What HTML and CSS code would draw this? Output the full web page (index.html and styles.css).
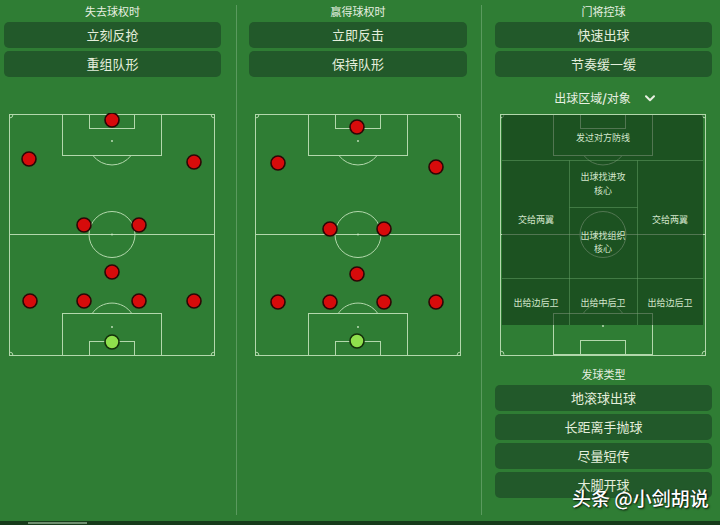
FILE: index.html
```html
<!DOCTYPE html>
<html lang="zh">
<head>
<meta charset="utf-8">
<title>战术设置</title>
<link rel="stylesheet" href="styles.css">
</head>
<body>
<div class="screen">
  <div class="cols">
    <section class="col c1">
      <div class="hd">失去球权时</div>
      <div class="btns">
        <div class="btn">立刻反抢</div>
        <div class="btn">重组队形</div>
      </div>
      <svg class="pitch" viewBox="0 0 208 244" width="208" height="244">
        <g class="ln">
          <rect x="1.5" y="1.5" width="205" height="241"/>
          <line x1="1.5" y1="121.5" x2="206.5" y2="121.5"/>
          <circle cx="104" cy="121.5" r="23"/>
          <rect x="54.5" y="1.5" width="99" height="41"/>
          <rect x="81.5" y="1.5" width="45" height="14"/>
          <path d="M84.9 42.5 A24 24 0 0 0 123.1 42.5"/>
          <rect x="54.5" y="200.5" width="99" height="42"/>
          <rect x="81.5" y="228.5" width="45" height="14"/>
          <path d="M84.2 200.5 A24 24 0 0 1 123.8 200.5"/>
          <path d="M1.5 5 A3.5 3.5 0 0 0 5 1.5 M203 1.5 A3.5 3.5 0 0 0 206.5 5 M1.5 239 A3.5 3.5 0 0 1 5 242.5 M203 242.5 A3.5 3.5 0 0 1 206.5 239"/>
        </g>
        <g class="dot"><circle cx="104" cy="121.5" r="0.9"/><circle cx="104" cy="28" r="0.9"/><circle cx="104" cy="214" r="0.9"/></g>
        <g class="pl">
          <circle cx="104" cy="7" r="7"/>
          <circle cx="21" cy="46" r="7"/>
          <circle cx="186" cy="49" r="7"/>
          <circle cx="76" cy="112" r="7"/>
          <circle cx="131" cy="112" r="7"/>
          <circle cx="104" cy="159" r="7"/>
          <circle cx="22" cy="188" r="7"/>
          <circle cx="76" cy="188" r="7"/>
          <circle cx="131" cy="188" r="7"/>
          <circle cx="186" cy="188" r="7"/>
        </g>
        <circle class="gk" cx="104" cy="229" r="7"/>
      </svg>
    </section>
    <div class="vr"></div>
    <section class="col c2">
      <div class="hd">赢得球权时</div>
      <div class="btns">
        <div class="btn">立即反击</div>
        <div class="btn">保持队形</div>
      </div>
      <svg class="pitch" viewBox="0 0 208 244" width="208" height="244">
        <g class="ln">
          <rect x="1.5" y="1.5" width="205" height="241"/>
          <line x1="1.5" y1="121.5" x2="206.5" y2="121.5"/>
          <circle cx="104" cy="121.5" r="23"/>
          <rect x="54.5" y="1.5" width="99" height="41"/>
          <rect x="81.5" y="1.5" width="45" height="14"/>
          <path d="M84.9 42.5 A24 24 0 0 0 123.1 42.5"/>
          <rect x="54.5" y="200.5" width="99" height="42"/>
          <rect x="81.5" y="228.5" width="45" height="14"/>
          <path d="M84.2 200.5 A24 24 0 0 1 123.8 200.5"/>
          <path d="M1.5 5 A3.5 3.5 0 0 0 5 1.5 M203 1.5 A3.5 3.5 0 0 0 206.5 5 M1.5 239 A3.5 3.5 0 0 1 5 242.5 M203 242.5 A3.5 3.5 0 0 1 206.5 239"/>
        </g>
        <g class="dot"><circle cx="104" cy="121.5" r="0.9"/><circle cx="104" cy="28" r="0.9"/><circle cx="104" cy="214" r="0.9"/></g>
        <g class="pl">
          <circle cx="103" cy="14" r="7"/>
          <circle cx="24" cy="50" r="7"/>
          <circle cx="182" cy="54" r="7"/>
          <circle cx="76" cy="116" r="7"/>
          <circle cx="130" cy="116" r="7"/>
          <circle cx="103" cy="161" r="7"/>
          <circle cx="24" cy="189" r="7"/>
          <circle cx="76" cy="189" r="7"/>
          <circle cx="130" cy="189" r="7"/>
          <circle cx="182" cy="189" r="7"/>
        </g>
        <circle class="gk" cx="103" cy="228" r="7"/>
      </svg>
    </section>
    <div class="vr"></div>
    <section class="col c3">
      <div class="hd">门将控球</div>
      <div class="btns">
        <div class="btn">快速出球</div>
        <div class="btn">节奏缓一缓</div>
      </div>
      <div class="sel">
        <span>出球区域<b>/</b>对象</span>
        <svg class="chev" viewBox="0 0 10 7" width="10" height="7"><path d="M1 1.2 L5 5.2 L9 1.2"/></svg>
      </div>
      <svg class="pitch" viewBox="0 0 208 244" width="208" height="244">
        <g class="ln">
          <rect x="1.5" y="1.5" width="205" height="241"/>
          <line x1="1.5" y1="121.5" x2="206.5" y2="121.5"/>
          <circle cx="104" cy="121.5" r="23"/>
          <rect x="54.5" y="1.5" width="99" height="41"/>
          <rect x="81.5" y="1.5" width="45" height="14"/>
          <path d="M84.9 42.5 A24 24 0 0 0 123.1 42.5"/>
          <rect x="54.5" y="200.5" width="99" height="41"/>
          <rect x="81.5" y="227.5" width="45" height="14"/>
          <path d="M84.2 200.5 A24 24 0 0 1 123.8 200.5"/>
          <path d="M1.5 5 A3.5 3.5 0 0 0 5 1.5 M203 1.5 A3.5 3.5 0 0 0 206.5 5 M1.5 238 A3.5 3.5 0 0 1 5 241.5 M203 241.5 A3.5 3.5 0 0 1 206.5 238"/>
        </g>
        <g class="dot"><circle cx="104" cy="213" r="0.9"/></g>
        <rect class="zone" x="3" y="2" width="201" height="210"/>
        <g class="zl">
          <line x1="3" y1="47.5" x2="204" y2="47.5"/>
          <line x1="3" y1="165.5" x2="204" y2="165.5"/>
          <line x1="70.5" y1="47.5" x2="70.5" y2="212"/>
          <line x1="138.5" y1="47.5" x2="138.5" y2="212"/>
          <line x1="70.5" y1="94.5" x2="138.5" y2="94.5"/>
        </g>
        <g class="zt">
          <text x="104" y="24">发过对方防线</text>
          <text x="104" y="63">出球找进攻</text>
          <text x="104" y="77">核心</text>
          <text x="37" y="106">交给两翼</text>
          <text x="171" y="106">交给两翼</text>
          <text x="104" y="122">出球找组织</text>
          <text x="104" y="135">核心</text>
          <text x="37" y="189">出给边后卫</text>
          <text x="104" y="189">出给中后卫</text>
          <text x="171" y="189">出给边后卫</text>
        </g>
      </svg>
      <div class="hd hd2">发球类型</div>
      <div class="btns btns2">
        <div class="btn">地滚球出球</div>
        <div class="btn">长距离手抛球</div>
        <div class="btn">尽量短传</div>
        <div class="btn">大脚开球</div>
      </div>
    </section>
  </div>
  <div class="bottom"><span class="tab"></span></div>
  <div class="wm">头条 @小剑胡说</div>
</div>
</body>
</html>
```

FILE: styles.css
```css
html, body {
  margin: 0;
  padding: 0;
}
body {
  background: #2f7d34;
  font-family: "Noto Sans CJK SC", "Noto Sans", sans-serif;
  color: #e5eedd;
}
.screen {
  width: 720px;
  height: 525px;
  position: relative;
  overflow: hidden;
  display: flex;
  flex-direction: column;
}
.cols {
  display: flex;
  height: 521px;
}
.col {
  display: flex;
  flex-direction: column;
  box-sizing: border-box;
}
.c1 { width: 236px; padding-left: 4px; }
.c2 { width: 244px; padding-left: 12px; }
.c3 { width: 238px; padding-left: 13px; }
.c1 > .hd, .c1 > .btns, .c3 > .hd, .c3 > .btns, .c3 > .sel { width: 217px; }
.c2 > .hd, .c2 > .btns { width: 218px; }

.vr {
  width: 1px;
  height: 510px;
  margin-top: 5px;
  background: #5a9a5e;
}
.hd {
  height: 22px;
  line-height: 22px;
  text-align: center;
  font-size: 11px;
  color: #e8f0e2;
}
.btns {
  display: flex;
  flex-direction: column;
  gap: 3px;
}
.btn {
  height: 26px;
  line-height: 26px;
  border-radius: 5px;
  background: #22592a;
  text-align: center;
  font-size: 13px;
  color: #e4eedc;
}
.pitch {
  display: block;
  margin-top: 36px;
  margin-left: 4px;
}
.c2 .pitch { margin-left: 5px; }
.c3 .pitch { margin-top: 6px; margin-left: 4px; }

.ln {
  fill: none;
  stroke: #b3d8ac;
  stroke-width: 1;
}
.dot { fill: #c9e6c2; }
.pl circle {
  fill: #d70b0b;
  stroke: #2c0606;
  stroke-width: 1.6;
}
.gk {
  fill: #8fe04c;
  stroke: #14300a;
  stroke-width: 1.6;
}
.zone { fill: rgba(16, 54, 21, 0.6); }
.zl line {
  stroke: rgba(110, 170, 110, 0.45);
  stroke-width: 1;
}
.zt text {
  font-family: "Noto Sans CJK SC", sans-serif;
  font-size: 9px;
  fill: #d3e6cc;
  text-anchor: middle;
  dominant-baseline: central;
}

.sel {
  margin-top: 12px;
  height: 18px;
  line-height: 18px;
  display: flex;
  justify-content: center;
  align-items: center;
  gap: 14px;
  font-size: 12px;
  color: #e8f0e2;
  padding-left: 2px;
  box-sizing: border-box;
}
.sel b { font-weight: 700; }
.chev path {
  fill: none;
  stroke: #e8f0e2;
  stroke-width: 2;
  stroke-linecap: round;
  stroke-linejoin: round;
}
.hd2 {
  margin-top: 7px;
  height: 20px;
  line-height: 20px;
}
.btns2 { margin-top: 1px; }

.bottom {
  height: 4px;
  background: #173b1b;
  display: flex;
  align-items: center;
}
.tab {
  display: block;
  margin-left: 28px;
  width: 59px;
  height: 2px;
  background: #6f8f70;
}
.wm {
  position: absolute;
  left: 572px;
  top: 484px;
  font-size: 19px;
  font-weight: 500;
  color: #ffffff;
  white-space: nowrap;
  text-shadow: 1px 1px 2px rgba(0, 0, 0, 0.85), 0 0 1px rgba(0, 0, 0, 0.6);
  font-family: "Noto Sans CJK SC", sans-serif;
}
```
